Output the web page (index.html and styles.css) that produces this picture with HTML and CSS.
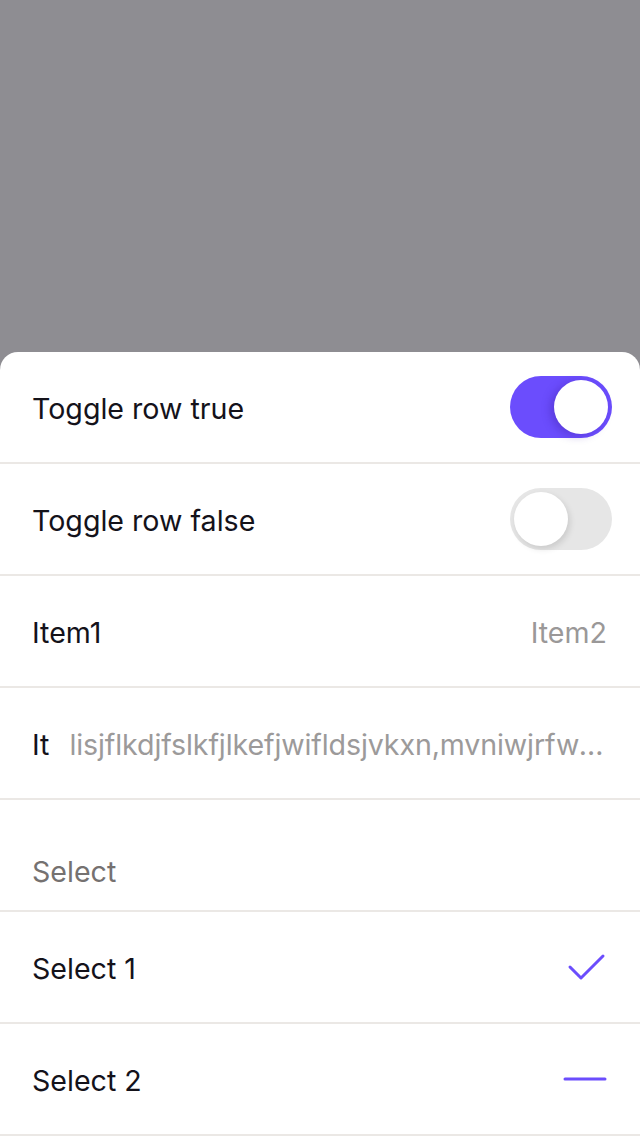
FILE: index.html
```html
<!DOCTYPE html>
<html>
<head>
<meta charset="utf-8">
<link rel="stylesheet" href="styles.css">
</head>
<body>
<div class="screen">
  <div class="overlay"></div>
  <div class="sheet">
    <div class="row">
      <span class="label">Toggle row true</span>
      <span class="switch on"><span class="knob"></span></span>
    </div>
    <div class="row">
      <span class="label">Toggle row false</span>
      <span class="switch off"><span class="knob"></span></span>
    </div>
    <div class="row">
      <span class="label">Item1</span>
      <span class="extra">Item2</span>
    </div>
    <div class="row">
      <span class="label">It</span>
      <span class="extra long">lisjflkdjfslkfjlkefjwifldsjvkxn,mvniwjrfwoeijflkdsjf</span>
    </div>
    <div class="row header">
      <span class="header-text">Select</span>
    </div>
    <div class="row">
      <span class="label">Select 1</span>
      <svg class="icon" width="40" height="28" viewBox="0 0 40 28"><path d="M3 14 L14 25 L36 3" fill="none" stroke="#6b4dfd" stroke-width="3" stroke-linecap="round" stroke-linejoin="round"/></svg>
    </div>
    <div class="row">
      <span class="label">Select 2</span>
      <svg class="icon" width="44" height="10" viewBox="0 0 44 10"><path d="M2 5 H42" fill="none" stroke="#6b4dfd" stroke-width="3" stroke-linecap="round"/></svg>
    </div>
  </div>
</div>
</body>
</html>
```
FILE: styles.css
```css
* { box-sizing: border-box; }
html, body { margin: 0; padding: 0; }
body {
  background: #8e8d92;
  font-family: Inter, "Noto Sans", sans-serif;
}
.screen {
  width: 640px;
  height: 1136px;
  display: flex;
  flex-direction: column;
  overflow: hidden;
}
.overlay {
  height: 352px;
  flex: none;
  background: #8e8d92;
}
.sheet {
  flex: 1;
  background: #ffffff;
  border-radius: 18px 18px 0 0;
  display: flex;
  flex-direction: column;
}
.row {
  height: 112px;
  flex: none;
  display: flex;
  align-items: center;
  padding: 0 33px 0 32px;
  border-bottom: 2px solid #ebe8e5;
  gap: 20px;
  font-size: 28.6px;
}
.label {
  color: #14121a;
  white-space: nowrap;
  flex: none;
  padding-top: 2px;
}
.extra {
  margin-left: auto;
  color: #9a9898;
  white-space: nowrap;
  padding-top: 2px;
}
.extra.long {
  flex: 1;
  min-width: 0;
  overflow: hidden;
  text-overflow: ellipsis;
  color: #9c9a9a;
  letter-spacing: -0.12px;
}
.header {
  align-items: flex-end;
  padding-bottom: 21px;
}
.header-text {
  color: #757170;
}
.switch {
  margin-left: auto;
  margin-right: -5px;
  width: 102px;
  height: 62px;
  border-radius: 31px;
  display: flex;
  align-items: center;
  padding: 4px;
  flex: none;
}
.switch.on {
  background: #6b4dfd;
  justify-content: flex-end;
}
.switch.off {
  background: #e6e6e6;
  justify-content: flex-start;
}
.knob {
  width: 54px;
  height: 54px;
  border-radius: 50%;
  background: #ffffff;
}
.switch.on .knob {
  box-shadow: -4px 2px 8px rgba(60, 30, 160, 0.35);
}
.switch.off .knob {
  box-shadow: 2px 3px 6px rgba(0, 0, 0, 0.12);
}
.icon {
  margin-left: auto;
  flex: none;
}
```
